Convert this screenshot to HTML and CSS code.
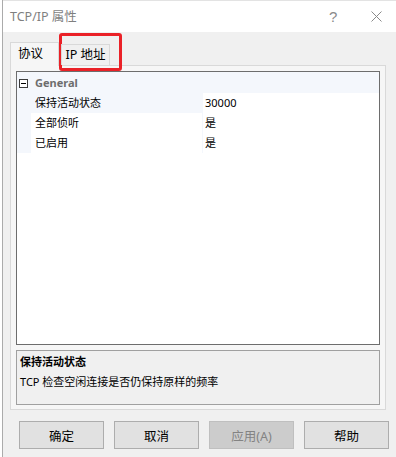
FILE: index.html
```html
<html>
	<head>
		<title>TCP/IP 属性</title>
		<link rel="stylesheet" href="styles.css">
	</head>
	<body>
		<div class=Window>
			<div class=TitleBar>
				<span class=TitleText>TCP/IP 属性</span>
				<span class=TitleHelp>?</span>
				<span class=TitleClose>
					<svg width="11" height="11" viewBox="0 0 11 11"><path d="M0.5 0.5 L10.5 10.5 M10.5 0.5 L0.5 10.5" stroke="#8a8a8a" stroke-width="1" fill="none"/></svg>
				</span>
			</div>
			<div class=Client>
				<div class=TabStrip>
					<div class="Tab TabSelected">协议</div>
					<div class=Tab>IP 地址</div>
				</div>
				<div class=TabPanel>
					<div class=PropGrid>
						<div class=PropCategory>
							<span class=PropToggle>
								<svg width="9" height="9" viewBox="0 0 9 9"><rect x="0.5" y="0.5" width="8" height="8" fill="#fff" stroke="#3c3c3c"/><path d="M2 4.5 H7" stroke="#000" stroke-width="1"/></svg>
							</span>
							<span class=PropCategoryName>General</span>
						</div>
						<div class="PropRow PropSelected">
							<div class=PropName>保持活动状态</div>
							<div class=PropValue>30000</div>
						</div>
						<div class=PropRow>
							<div class=PropName>全部侦听</div>
							<div class=PropValue>是</div>
						</div>
						<div class=PropRow>
							<div class=PropName>已启用</div>
							<div class=PropValue>是</div>
						</div>
					</div>
					<div class=PropDesc>
						<div class=PropDescTitle>保持活动状态</div>
						<div class=PropDescText>TCP 检查空闲连接是否仍保持原样的频率</div>
					</div>
				</div>
				<div class=ButtonRow>
					<button class=DlgButton>确定</button>
					<button class=DlgButton>取消</button>
					<button class="DlgButton DlgButtonDisabled" disabled>应用(A)</button>
					<button class=DlgButton>帮助</button>
				</div>
			</div>
		</div>
		<div class=Highlight></div>
	</body>
</html>
```

FILE: styles.css
```css
/**************************************************************************/
/*
/* Default Formatting
/*
/**************************************************************************/

body {
	margin: 0;
	background-color: #ffffff;
	font-family: "Noto Sans", "Noto Sans CJK SC", sans-serif;
	font-size: 12px;
	color: #000000;
	position: relative;
	height: 457px;
	overflow: hidden;
}

/**************************************************************************/
/*
/* Window frame
/*
/**************************************************************************/

.Window {
	margin-left: 2px;
	border-left: 1px solid #ababab;
	height: 457px;
	box-sizing: border-box;
}

.TitleBar {
	height: 32px;
	background-color: #ffffff;
	display: flex;
	align-items: center;
	padding-left: 7px;
	box-sizing: border-box;
	border-top: 1px solid #e3e3e3;
}

.TitleText {
	color: #7f7f7f;
	font-size: 12.5px;
	line-height: 16px;
	flex: 1;
}

.TitleHelp {
	color: #8a8a8a;
	font-size: 15px;
	line-height: 16px;
	width: 42px;
	font-family: "Liberation Sans", sans-serif;
}

.TitleClose {
	width: 25px;
	height: 11px;
	display: flex;
}

.Client {
	background-color: #f0f0f0;
	height: 425px;
	padding-top: 10px;
	box-sizing: border-box;
}

/**************************************************************************/
/*
/* Tabs
/*
/**************************************************************************/

.TabStrip {
	display: flex;
	align-items: flex-end;
	height: 23px;
	margin-left: 7px;
	position: relative;
	z-index: 1;
}

.Tab {
	height: 21px;
	width: 49px;
	margin-left: 2px;
	border: 1px solid #d9d9d9;
	border-bottom: none;
	box-sizing: border-box;
	background-color: #f0f0f0;
	font-size: 12.5px;
	line-height: 19px;
	text-align: center;
}

.TabSelected {
	height: 24px;
	width: 49px;
	margin-left: 0;
	margin-bottom: -1px;
	text-align: left;
	padding-left: 7px;
	line-height: 21px;
	background-color: #f6f6f6;
}

.TabPanel {
	margin-left: 7px;
	width: 376px;
	height: 345px;
	border: 1px solid #d9d9d9;
	box-sizing: border-box;
	padding: 5px;
	background-color: #f6f6f6;
}

/**************************************************************************/
/*
/* Property grid
/*
/**************************************************************************/

.PropGrid {
	height: 274px;
	border: 1px solid #6d6d6d;
	box-sizing: border-box;
	background-color: #ffffff;
	font-size: 11px;
}

.PropCategory {
	height: 21px;
	padding-top: 1px;
	box-sizing: border-box;
	background-color: #f4f7fc;
	display: flex;
	align-items: center;
}

.PropToggle {
	width: 9px;
	height: 9px;
	margin-left: 2px;
	display: flex;
}

.PropCategoryName {
	margin-left: 7px;
	font-weight: bold;
	color: #6d6d6d;
	line-height: 14px;
}

.PropRow {
	display: grid;
	grid-template-columns: 171px 1fr;
	column-gap: 1px;
	height: 19px;
	padding-left: 14px;
	border-bottom: 1px solid #f4f7fc;
	background-color: #f4f7fc;
	line-height: 20px;
}

.PropName {
	background-color: #ffffff;
	padding-left: 4px;
}

.PropValue {
	background-color: #ffffff;
	padding-left: 2px;
}

.PropSelected .PropName {
	background-color: #f4f7fc;
}

/**************************************************************************/
/*
/* Description box
/*
/**************************************************************************/

.PropDesc {
	margin-top: 5px;
	height: 55px;
	border: 1px solid #a0a0a0;
	box-sizing: border-box;
	background-color: #f0f0f0;
	padding: 3px 3px 0 3px;
	font-size: 11px;
}

.PropDescTitle {
	font-weight: bold;
	line-height: 16px;
}

.PropDescText {
	margin-top: 4px;
	line-height: 16px;
}

/**************************************************************************/
/*
/* Buttons
/*
/**************************************************************************/

.ButtonRow {
	display: flex;
	gap: 10px;
	margin-top: 11px;
	padding-left: 16px;
}

.DlgButton {
	width: 85px;
	height: 28px;
	background-color: #e1e1e1;
	border: 1px solid #adadad;
	font-family: "Noto Sans", "Noto Sans CJK SC", sans-serif;
	font-size: 12.5px;
	color: #000000;
	padding: 0;
}

.DlgButtonDisabled {
	background-color: #cccccc;
	border-color: #bfbfbf;
	color: #838383;
}

/**************************************************************************/
/*
/* Annotation
/*
/**************************************************************************/

.Highlight {
	position: absolute;
	left: 59px;
	top: 33px;
	width: 63px;
	height: 38px;
	border: 3px solid #ea2127;
	border-radius: 3px;
	box-sizing: border-box;
}
```
